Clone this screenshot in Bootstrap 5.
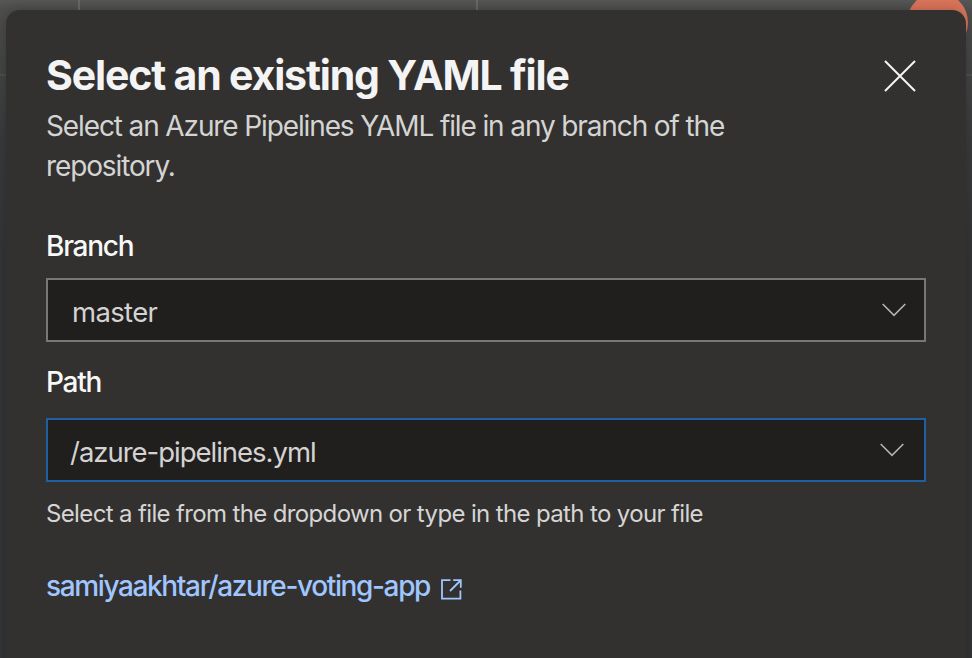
<!DOCTYPE html>
<html lang="en">
<head>
<meta charset="utf-8">
<meta name="viewport" content="width=device-width, initial-scale=1">
<title>Select an existing YAML file</title>
<link href="https://cdn.jsdelivr.net/npm/bootstrap@5.3.0/dist/css/bootstrap.min.css" rel="stylesheet">
<style>
  body { font-family: Inter, "Liberation Sans", sans-serif; background: #323436; height: 658px; }
  .backdrop { inset: 0; background: linear-gradient(#565656, #4d4d4c 10px, #444545 60px, #393a3b 140px, #323436 260px); }
  .rule-v { top: 0; width: 2px; height: 12px; background: #686868; }
  .rule-v-first { left: 78px; }
  .rule-v-second { left: 476px; }
  .rule-h { left: 0; right: 0; top: 74px; height: 2px; background: #4e4e4e; }
  .avatar { left: 907px; top: -8px; width: 61px; height: 61px; background: #d8745a; }
  .panel { width: 960px; height: 660px; margin: 10px 0 0 6px; padding: 41px 40px 0; border-radius: 14px 14px 0 0; background: #323130; box-shadow: 0 0 12px rgba(0,0,0,.22); }
  .panel-title { font-size: 41px; line-height: 48px; font-weight: 650; letter-spacing: -1.16px; color: #f4f4f4; }
  .sub { font-size: 28px; line-height: 40px; letter-spacing: -1.12px; color: #d4d4d3; width: 720px; margin: 7px 0 40px; }
  .field-label { font-size: 28px; line-height: 40px; font-weight: 450; letter-spacing: -1.25px; color: #f8f8f7; }
  .label-path { margin-top: 20px; }
  .box { height: 64px; border: 2px solid #797775; background: #201f1e; font-size: 27.5px; letter-spacing: -.65px; color: #d4d3d2; font-weight: 400; padding: 5px 18px 0 24px; }
  .box-branch { margin-top: 12px; }
  .box-active { border-color: #215fa3; letter-spacing: -1.02px; padding: 5px 20px 0 22px; }
  .helper { font-size: 24px; line-height: 32px; letter-spacing: -.64px; color: #d6d5d4; }
  .repo { font-size: 28px; line-height: 40px; letter-spacing: -1.37px; color: #a0c6ff; font-weight: 450; margin-top: 36px; }
  .repo svg { margin: 7px 0 0 11px; }
  .close-btn { margin: 7px 8px 0 0; }
  .chev { margin-top: -5px; }
</style>
<script src="https://cdn.jsdelivr.net/npm/bootstrap@5.3.0/dist/js/bootstrap.bundle.min.js"></script>
</head>
<body class="m-0 overflow-hidden position-relative">
<div class="backdrop position-absolute overflow-hidden">
  <div class="rule-v rule-v-first position-absolute"></div>
  <div class="rule-v rule-v-second position-absolute"></div>
  <div class="rule-h position-absolute"></div>
  <div class="avatar position-absolute rounded-circle"></div>
</div>
<div class="d-flex">
<main class="panel position-relative flex-shrink-0">
  <header class="d-flex justify-content-between align-items-start">
    <div>
      <h1 class="panel-title m-0 text-nowrap">Select an existing YAML file</h1>
      <p class="sub">Select an Azure Pipelines YAML file in any branch of the<br>repository.</p>
    </div>
    <button type="button" class="close-btn border-0 bg-transparent p-0 d-flex" aria-label="Close">
      <svg width="36" height="36" viewBox="0 0 36 36" fill="none" stroke="#f4f4f0" stroke-width="2"><path d="M3 3 33 33M33 3 3 33"/></svg>
    </button>
  </header>
  <div class="field-label">Branch</div>
  <div class="box box-branch d-flex align-items-center justify-content-between">
    <span>master</span>
    <svg class="chev" width="24" height="14" viewBox="0 0 24 14" fill="none" stroke="#b5b4b3" stroke-width="1.6"><path d="M.7 1 12 12.3 23.3 1"/></svg>
  </div>
  <div class="field-label label-path">Path</div>
  <div class="box box-active d-flex align-items-center justify-content-between mt-3">
    <span>/azure-pipelines.yml</span>
    <svg class="chev" width="24" height="14" viewBox="0 0 24 14" fill="none" stroke="#b5b4b3" stroke-width="1.6"><path d="M.7 1 12 12.3 23.3 1"/></svg>
  </div>
  <div class="helper mt-3">Select a file from the dropdown or type in the path to your file</div>
  <a href="#" class="repo d-flex align-items-center text-decoration-none">
    <span>samiyaakhtar/azure-voting-app</span>
    <svg width="21" height="21" viewBox="0 0 21 21" fill="none" stroke="#a0c6ff" stroke-width="1.8"><path d="M9.5 1.2H1V19.6H19.4V11.5M9 12 19 2M12.2 1.2H19.8V8.8"/></svg>
  </a>
</main>
</div>
</body>
</html>
